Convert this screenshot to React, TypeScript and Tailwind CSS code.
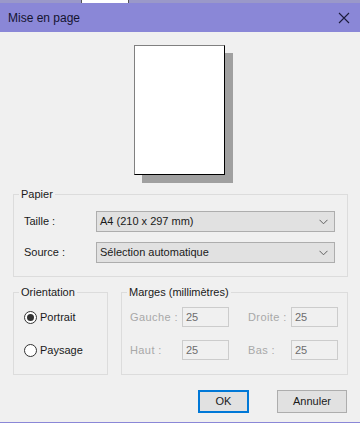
import React from "react";

function Chevron() {
  return (
    <svg width="9" height="6" viewBox="0 0 9 6" className="shrink-0">
      <polyline points="0.5,0.8 4.5,4.8 8.5,0.8" fill="none" stroke="#606060" strokeWidth="1" />
    </svg>
  );
}

function Select({ value }: { value: string }) {
  return (
    <div className="flex h-[21px] w-[239px] items-center justify-between border border-[#adadad] bg-[#e1e1e1] pl-[3px] pr-[6px] text-[#1a1a1a]">
      <span>{value}</span>
      <Chevron />
    </div>
  );
}

function Radio({ checked, label }: { checked?: boolean; label: string }) {
  return (
    <div className="flex h-[20px] items-center gap-[3px]">
      <div className="flex h-[13px] w-[13px] items-center justify-center rounded-full border border-[#333333] bg-white">
        {checked && <div className="h-[7px] w-[7px] rounded-full bg-[#333333]" />}
      </div>
      <span className="text-[#1a1a1a]">{label}</span>
    </div>
  );
}

function MarginField({ label, value, labelW }: { label: string; value: string; labelW: string }) {
  return (
    <div className="flex h-[20px] items-center">
      <span className={`${labelW} tracking-[0.4px] text-[#a8a8a8]`}>{label}</span>
      <div className="flex h-[20px] w-[47px] items-center border border-[#cccccc] bg-[#f0f0f0] pl-[3px] text-[#6d6d6d]">
        {value}
      </div>
    </div>
  );
}

export default function App() {
  return (
    <div
      className="flex h-[423px] w-[360px] flex-col overflow-hidden bg-[#f0f0f0] text-[11px]"
      style={{ fontFamily: '"Liberation Sans", Arial, sans-serif' }}
    >
      <div className="flex h-[3px] bg-[#9a98c9]">
        <div className="ml-[81px] h-[3px] w-[48px] border-x border-[#555] bg-white" />
      </div>
      <div className="flex h-[29px] items-center justify-between bg-[#8a87d7] pl-[8px] pr-[10px]">
        <span className="text-[12px] text-[#141430]">Mise en page</span>
        <svg width="12" height="12" viewBox="0 0 12 12">
          <path d="M1 1 L11 11 M11 1 L1 11" stroke="#1c1c3c" strokeWidth="1.1" />
        </svg>
      </div>

      <div className="flex flex-1 flex-col">
        <div className="flex justify-center pt-[13px] pr-[2px]">
          <div className="h-[130px] w-[91px] border-t border-l border-[#808080] border-r border-b border-r-black border-b-black bg-white shadow-[8px_8px_0_#a0a0a0]" />
        </div>

        <fieldset className="mt-[12px] ml-[13px] mr-[12px] border border-[#dcdcdc] pt-[10px] pr-[12px] pb-[13px] pl-[10px]">
          <legend className="ml-[-5px] px-[2px] leading-[14px] text-[#1a1a1a]">Papier</legend>
          <div className="flex flex-col gap-[10px]">
            <div className="flex items-center">
              <span className="w-[72px] text-[#1a1a1a]">Taille :</span>
              <Select value="A4 (210 x 297 mm)" />
            </div>
            <div className="flex items-center">
              <span className="w-[72px] text-[#1a1a1a]">Source :</span>
              <Select value="Sélection automatique" />
            </div>
          </div>
        </fieldset>

        <div className="mt-[8px] ml-[13px] mr-[12px] flex gap-[13px]">
          <fieldset className="h-[90px] w-[95px] border border-[#dcdcdc] pt-[8px] pl-[10px]">
            <legend className="ml-[-5px] px-[2px] leading-[14px] text-[#1a1a1a]">Orientation</legend>
            <div className="flex flex-col gap-[13px]">
              <Radio checked label="Portrait" />
              <Radio label="Paysage" />
            </div>
          </fieldset>
          <fieldset className="h-[90px] flex-1 border border-[#dcdcdc] pt-[8px] pl-[8px]">
            <legend className="ml-[-3px] px-[2px] leading-[14px] text-[#1a1a1a]">Marges (millimètres)</legend>
            <div className="flex flex-col gap-[13px]">
              <div className="flex gap-[19px]">
                <MarginField label="Gauche :" value="25" labelW="w-[52px]" />
                <MarginField label="Droite :" value="25" labelW="w-[43px]" />
              </div>
              <div className="flex gap-[19px]">
                <MarginField label="Haut :" value="25" labelW="w-[52px]" />
                <MarginField label="Bas :" value="25" labelW="w-[43px]" />
              </div>
            </div>
          </fieldset>
        </div>

        <div className="mt-[15px] mr-[13px] flex justify-end gap-[28px]">
          <button className="flex h-[23px] w-[51px] items-center justify-center border-2 border-[#0078d7] bg-[#e1e1e1] text-[#1a1a1a]">
            OK
          </button>
          <button className="flex h-[23px] w-[70px] items-center justify-center border border-[#adadad] bg-[#e1e1e1] text-[#1a1a1a]">
            Annuler
          </button>
        </div>
      </div>
      <div className="h-[1px] bg-[#8a87d7]" />
    </div>
  );
}
